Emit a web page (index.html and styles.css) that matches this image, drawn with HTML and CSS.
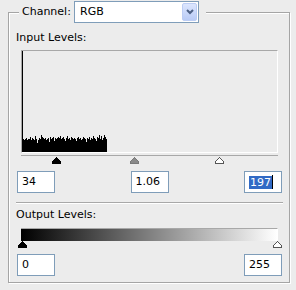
FILE: index.html
```html
<!DOCTYPE html>
<html>
<head>
<meta charset="utf-8">
<link rel="stylesheet" href="styles.css">
</head>
<body>
<fieldset class="group">
  <legend class="channel">
    <span class="channel-label">Channel:</span>
    <div class="combo">
      <span class="combo-value">RGB</span>
      <span class="combo-btn"><svg width="8" height="6" viewBox="0 0 8 6"><path d="M1 1 L4 4 L7 1" fill="none" stroke="#4d6185" stroke-width="2"/></svg></span>
    </div>
  </legend>

  <div class="section-label">Input Levels:</div>
  <div class="histogram">
    <svg class="hist-svg" width="256" height="101" viewBox="0 0 256 101" shape-rendering="crispEdges">
      <path fill="#000" d="M0 101 V0 H1 V88 H2 V89 H3 V88 H4 V87 H5 V89 H6 V88 H7 V88 H8 V86 H9 V89 H10 V87 H11 V88 H12 V89 H13 V85 H14 V88 H15 V92 H16 V89 H17 V87 H18 V88 H19 V84 H20 V86 H21 V87 H22 V88 H23 V87 H24 V89 H25 V88 H26 V87 H27 V91 H28 V86 H29 V88 H30 V87 H31 V86 H32 V90 H33 V87 H34 V88 H35 V87 H36 V86 H37 V87 H38 V85 H39 V88 H40 V87 H41 V86 H42 V88 H43 V90 H44 V87 H45 V85 H46 V88 H47 V87 H48 V89 H49 V86 H50 V87 H51 V88 H52 V87 H53 V88 H54 V90 H55 V87 H56 V86 H57 V88 H58 V87 H59 V89 H60 V88 H61 V86 H62 V87 H63 V88 H64 V91 H65 V87 H66 V88 H67 V86 H68 V89 H69 V87 H70 V88 H71 V85 H72 V87 H73 V88 H74 V90 H75 V86 H76 V87 H77 V84 H78 V88 H79 V85 H80 V89 H81 V87 H82 V84 H83 V86 H84 V88 H85 V101 Z"/>
    </svg>
  </div>
  <div class="slider input-slider">
    <svg class="thumb" style="left:31px" width="9" height="7" viewBox="0 0 9 7"><polygon points="4.5,0.5 8.5,4.5 8.5,6.5 0.5,6.5 0.5,4.5" fill="#000" stroke="#000"/></svg>
    <svg class="thumb" style="left:109px" width="9" height="7" viewBox="0 0 9 7"><polygon points="4.5,0.5 8.5,4.5 8.5,6.5 0.5,6.5 0.5,4.5" fill="#8a8a8a" stroke="#7a7a7a"/></svg>
    <svg class="thumb" style="left:194px" width="9" height="7" viewBox="0 0 9 7"><polygon points="4.5,0.5 8.5,4.5 8.5,6.5 0.5,6.5 0.5,4.5" fill="#fff" stroke="#555"/></svg>
  </div>
  <div class="fields">
    <div class="field">34</div>
    <div class="field">1.06</div>
    <div class="field"><span class="sel">197</span><span class="caret"></span></div>
  </div>

  <div class="sep"></div>

  <div class="section-label">Output Levels:</div>
  <div class="gradient"></div>
  <div class="slider output-slider">
    <svg class="thumb" style="left:-3px" width="9" height="7" viewBox="0 0 9 7"><polygon points="4.5,0.5 8.5,4.5 8.5,6.5 0.5,6.5 0.5,4.5" fill="#000" stroke="#000"/></svg>
    <svg class="thumb" style="left:252px" width="9" height="7" viewBox="0 0 9 7"><polygon points="4.5,0.5 8.5,4.5 8.5,6.5 0.5,6.5 0.5,4.5" fill="#fff" stroke="#555"/></svg>
  </div>
  <div class="fields out-fields">
    <div class="field">0</div>
    <div class="field">255</div>
  </div>
</fieldset>
</body>
</html>
```

FILE: styles.css
```css
html, body {
  margin: 0;
  padding: 0;
}
body {
  background: #ececec;
  font-family: "DejaVu Sans", "Liberation Sans", sans-serif;
  font-size: 11px;
  line-height: 14px;
  color: #000;
  width: 296px;
  height: 290px;
  overflow: hidden;
}

.group {
  margin: 1px 6px 0 8px;
  padding: 8px 6px 6px 7px;
  border: 1px solid #a5a5a5;
  box-shadow: inset 1px 1px 0 #fff, 1px 1px 0 #fff;
  min-width: 0;
}

.channel {
  display: flex;
  align-items: center;
  margin-left: 3px;
  padding: 0 7px 0 3px;
  background: #ececec;
}
.channel-label {
  width: 52px;
}
.combo {
  box-sizing: border-box;
  width: 125px;
  height: 22px;
  border: 1px solid #7f9db9;
  background: #fff;
  display: flex;
  align-items: center;
  justify-content: space-between;
  padding: 0 1px 0 5px;
}
.combo-btn {
  box-sizing: border-box;
  width: 15px;
  height: 18px;
  border: 1px solid #bccdf4;
  border-radius: 2px;
  background: linear-gradient(#dce6fe, #b9cbf6);
  display: flex;
  align-items: center;
  justify-content: center;
}
.combo-btn svg {
  display: block;
}

.section-label {
  white-space: nowrap;
}

.histogram {
  margin: 5px 5px 0 5px;
  height: 101px;
  border-style: solid;
  border-width: 1px;
  border-color: #a8a8a8 #fff #fff #a8a8a8;
}
.hist-svg {
  display: block;
}

.slider {
  position: relative;
  margin: 0 5px;
}
.input-slider {
  margin-top: 2px;
  border-top: 1px solid #a8a8a8;
  height: 9px;
}
.input-slider .thumb {
  top: 1px;
}
.output-slider {
  height: 7px;
}
.output-slider .thumb {
  top: 0;
}
.thumb {
  position: absolute;
  display: block;
  shape-rendering: crispEdges;
}

.fields {
  display: flex;
  justify-content: space-between;
  padding: 0 1px;
  margin-top: 6px;
}
.field {
  box-sizing: border-box;
  width: 38px;
  height: 22px;
  border: 1px solid #7f9db9;
  background: #fff;
  padding-left: 4px;
  line-height: 20px;
  display: flex;
  align-items: center;
}
.sel {
  background: #316ac5;
  color: #fff;
  line-height: 13px;
  padding: 0 1px;
}
.caret {
  width: 1px;
  height: 14px;
  background: #000;
}

.sep {
  margin-top: 9px;
  border-top: 1px solid #a8a8a8;
  border-bottom: 1px solid #fff;
  margin-bottom: 4px;
}

.gradient {
  margin: 6px 5px 0 5px;
  height: 12px;
  border-top: 1px solid #a8a8a8;
  border-right: 1px solid #fff;
  background: linear-gradient(to right, #000, #fff);
}

.out-fields {
  margin-top: 6px;
}
```
